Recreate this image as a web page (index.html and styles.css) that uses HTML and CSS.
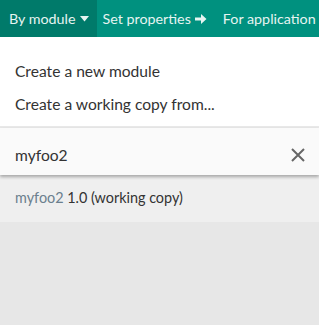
FILE: index.html
```html
<!DOCTYPE html>
<html lang="en">

<head>
  <meta charset="UTF-8" />
  <title>Modules</title>
  <link rel="stylesheet" href="styles.css">
</head>

<body>

  <nav class="tabs">
    <div class="tab active">By module
      <svg class="caret" width="9" height="6" viewBox="0 0 9 6"><path d="M0 0h9L4.5 5.5z" fill="currentColor" /></svg>
    </div>
    <div class="tab">Set properties
      <svg class="arrow" width="12" height="12" viewBox="0 0 12 12"><path d="M0 4.5h6V1l5.5 5L6 11V7.5H0z" fill="currentColor" /></svg>
    </div>
    <div class="tab">For application</div>
  </nav>

  <div class="menu">
    <div class="menu-item">Create a new module</div>
    <div class="menu-item">Create a working copy from...</div>
  </div>

  <div class="search">
    <input type="text" value="myfoo2" autofocus />
    <svg class="clear" width="14" height="14" viewBox="0 0 14 14"><path d="M1 1l12 12M13 1L1 13" stroke="currentColor" stroke-width="2" /></svg>
  </div>

  <ul class="results">
    <li><span class="match">myfoo2</span> 1.0 (working copy)</li>
  </ul>

</body>

</html>
```

FILE: styles.css
```css
body {
  font-family: 'Lato', sans-serif;
  background: #e7e7e7;
  margin: 0;
  color: #333;
}

.tabs {
  display: flex;
  height: 37px;
  background: #00917f;
  color: #e6f4f1;
  font-size: 14.3px;
  white-space: nowrap;
  overflow: hidden;
}

.tab {
  display: flex;
  align-items: center;
  gap: 4px;
  padding: 0 10px 0 6px;
}

.tab.active {
  background: #007a6a;
  padding: 0 8px 0 9px;
}

.caret {
  margin-top: 1px;
}

.menu {
  background: #fff;
  padding: 18px 0 5px;
  border-bottom: 2px solid #e8e8e8;
}

.menu-item {
  font-size: 15.6px;
  padding: 7px 15px 8px;
}

.search {
  display: flex;
  align-items: center;
  height: 40px;
  padding-top: 7px;
  background: #fafafa;
  box-shadow: 0 2px 3px rgba(0, 0, 0, 0.3);
  position: relative;
  z-index: 1;
}

.search input {
  flex: 1;
  border: none;
  background: transparent;
  font-family: inherit;
  font-size: 15.6px;
  color: #333;
  padding: 0 15px;
  outline: none;
}

.clear {
  color: #666;
  margin-right: 14px;
}

.results {
  list-style: none;
  margin: 0;
  padding: 0;
  background: #efefef;
}

.results li {
  font-size: 14.4px;
  padding: 14px 15px 16px;
}

.match {
  color: #6b7f8e;
}
```
